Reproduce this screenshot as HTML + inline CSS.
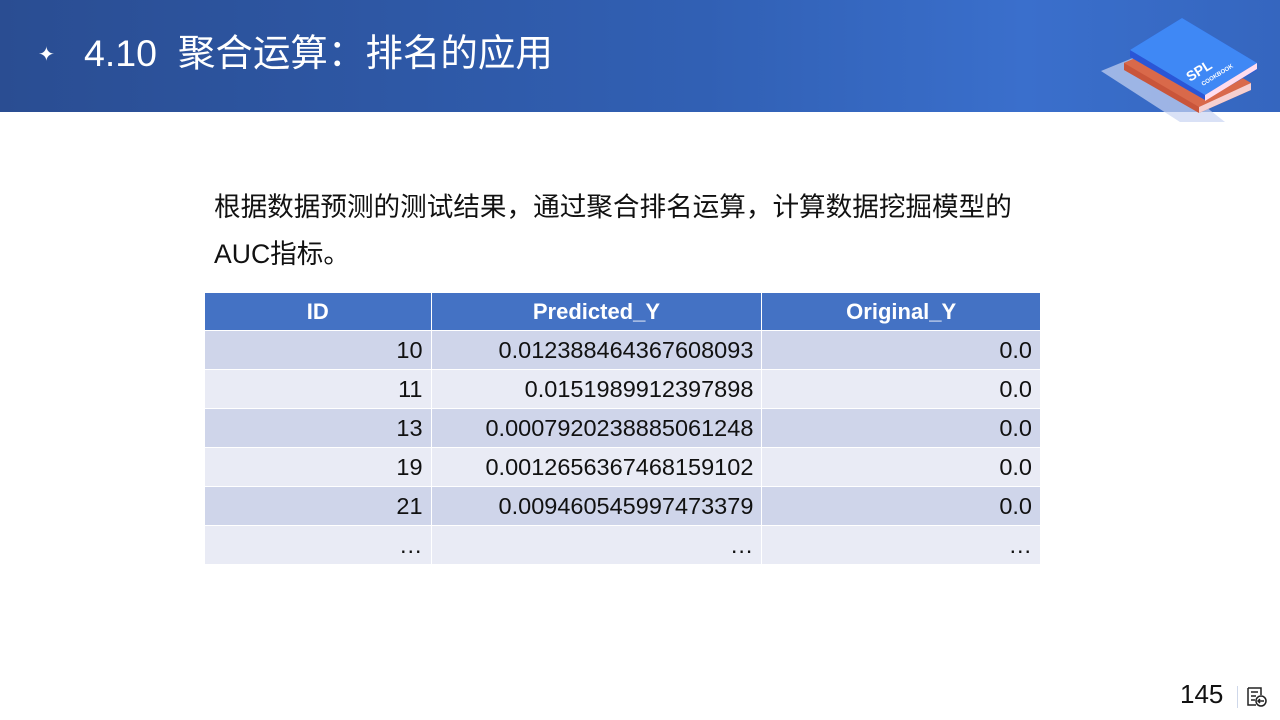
<!DOCTYPE html>
<html><head><meta charset="utf-8"><style>
body{margin:0;width:1280px;height:720px;background:#fff;position:relative;overflow:hidden;font-family:"Liberation Sans","Noto Sans CJK SC",sans-serif}
.hd{position:absolute;left:0;top:0;width:1280px;height:112px;background:linear-gradient(90deg,#2a4d92 0%,#3160b4 55%,#3a6fcc 80%,#3566bf 100%)}
.ttl{position:absolute;left:84px;top:29px;color:#fff;font-size:37.5px;line-height:48px;white-space:nowrap}
.star{position:absolute;left:38px;top:42px;color:#fff;font-size:20px}
.p{position:absolute;left:214px;top:184px;font-size:26.6px;line-height:47px;color:#111;width:900px;white-space:nowrap}
table{position:absolute;left:204px;top:292px;border-collapse:collapse;width:837px;font-size:23.5px;color:#111}
td,th{height:38px;padding:0 8px;border:1px solid #fff}
th{background:#4472c4;color:#fff;font-weight:bold;text-align:center;height:37px;font-size:22px}
td{text-align:right}
tr.a td{background:#cfd5ea}tr.b td{background:#e9ebf5}
.num{position:absolute;left:1180px;top:679px;font-size:26px;color:#111}
.sep{position:absolute;left:1237px;top:686px;width:1px;height:22px;background:#cfd8ea}
</style></head><body>
<div class="hd"></div>
<div class="star">✦</div>
<div class="ttl">4.10&nbsp; 聚合运算：排名的应用</div>
<svg style="position:absolute;left:1095px;top:10px" width="170" height="115" viewBox="1095 10 170 115">
<polygon points="1101,71 1140,55 1225,122 1180,122" fill="#c9d4f2" opacity="0.7"/>
<polygon points="1124,63 1177,40 1251,83 1251,90 1199,113 1124,70" fill="#c9553a"/>
<polygon points="1124,63 1177,40 1251,83 1199,107" fill="#d9694a"/>
<polygon points="1199,107 1251,83 1251,90 1199,113" fill="#f6d0d0"/>
<polygon points="1130,50 1182,18 1257,63 1257,70 1205,100 1130,57" fill="#2a56d6"/>
<polygon points="1130,50 1182,18 1257,63 1205,95" fill="#3f88f5"/>
<polygon points="1205,95 1257,63 1257,69 1205,101" fill="#fde"/>
<text x="1190" y="82" fill="#fff" font-size="14" font-weight="bold" transform="rotate(-32 1190 82)">SPL</text>
<text x="1203" y="86" fill="#fff" font-size="6" font-weight="bold" transform="rotate(-32 1203 86)">COOKBOOK</text>
</svg>
<div class="p">根据数据预测的测试结果，通过聚合排名运算，计算数据挖掘模型的<br>AUC指标。</div>
<table>
<colgroup><col style="width:227px"><col style="width:331px"><col style="width:279px"></colgroup>
<tr><th>ID</th><th>Predicted_Y</th><th>Original_Y</th></tr>
<tr class="a"><td>10</td><td>0.012388464367608093</td><td>0.0</td></tr>
<tr class="b"><td>11</td><td>0.0151989912397898</td><td>0.0</td></tr>
<tr class="a"><td>13</td><td>0.0007920238885061248</td><td>0.0</td></tr>
<tr class="b"><td>19</td><td>0.0012656367468159102</td><td>0.0</td></tr>
<tr class="a"><td>21</td><td>0.009460545997473379</td><td>0.0</td></tr>
<tr class="b"><td>…</td><td>…</td><td>…</td></tr>
</table>
<div class="num">145</div>
<div class="sep"></div>
<svg style="position:absolute;left:1246px;top:686px" width="22" height="22" viewBox="0 0 22 22" fill="none" stroke="#222" stroke-width="1.5">
<path d="M2 2h13v7M2 2v17h8M5 6h7M5 10h5M5 14h4"/><circle cx="15" cy="15" r="5"/><path d="M18 15h-6M14 13l-2 2 2 2"/>
</svg>
</body></html>
